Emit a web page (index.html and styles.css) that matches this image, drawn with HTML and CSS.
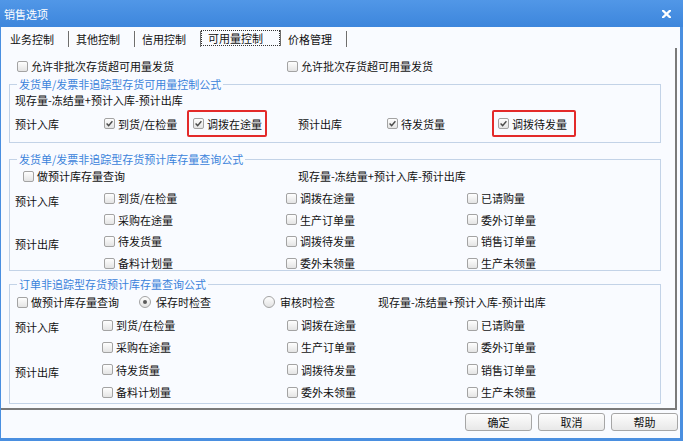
FILE: index.html
```html
<!DOCTYPE html>
<html lang="zh-CN">
<head>
<meta charset="utf-8">
<title>销售选项</title>
<link rel="stylesheet" href="styles.css">
</head>
<body>
<div class="window">
  <div class="titlebar">
    <span class="title">销售选项</span>
    <svg class="close" width="9" height="8" viewBox="0 0 9 8"><path d="M1 0.6 L8 7.4 M8 0.6 L1 7.4" stroke="#fff" stroke-width="2.2" stroke-linecap="square"/></svg>
  </div>
  <div class="frame">
    <div class="tabs">
      <span class="tab">业务控制</span>
      <span class="tab">其他控制</span>
      <span class="tab">信用控制</span>
      <span class="tab tab-active"><span class="focus">可用量控制</span></span>
      <span class="tab">价格管理</span>
    </div>
    <div class="panel">
      <div class="top-row">
        <span class="chk"><span class="box"></span>允许非批次存货超可用量发货</span>
        <span class="chk"><span class="box"></span>允许批次存货超可用量发货</span>
      </div>

      <fieldset class="group g1">
        <legend>发货单/发票非追踪型存货可用量控制公式</legend>
        <div class="formula">现存量-冻结量+预计入库-预计出库</div>
        <div class="g1-row">
          <span class="lbl w-lbl">预计入库</span>
          <span class="chk w-a"><span class="box checked"><svg width="9" height="9" viewBox="0 0 9 9"><path d="M1.6 4.6 L3.6 6.6 L7.4 2.2" fill="none" stroke="#4a4a4a" stroke-width="1.4"/></svg></span>到货/在检量</span>
          <span class="hl w-hl1"><span class="chk"><span class="box checked"><svg width="9" height="9" viewBox="0 0 9 9"><path d="M1.6 4.6 L3.6 6.6 L7.4 2.2" fill="none" stroke="#4a4a4a" stroke-width="1.4"/></svg></span>调拨在途量</span></span>
          <span class="lbl w-lbl">预计出库</span>
          <span class="chk w-b"><span class="box checked"><svg width="9" height="9" viewBox="0 0 9 9"><path d="M1.6 4.6 L3.6 6.6 L7.4 2.2" fill="none" stroke="#4a4a4a" stroke-width="1.4"/></svg></span>待发货量</span>
          <span class="hl w-hl2"><span class="chk"><span class="box checked"><svg width="9" height="9" viewBox="0 0 9 9"><path d="M1.6 4.6 L3.6 6.6 L7.4 2.2" fill="none" stroke="#4a4a4a" stroke-width="1.4"/></svg></span>调拨待发量</span></span>
        </div>
      </fieldset>

      <fieldset class="group g2">
        <legend>发货单/发票非追踪型存货预计库存量查询公式</legend>
        <div class="head2">
          <span class="chk h2-first"><span class="box"></span>做预计库存量查询</span>
          <span class="formula">现存量-冻结量+预计入库-预计出库</span>
        </div>
        <div class="grid grid2">
          <span class="lbl">预计入库</span>
          <span class="chk"><span class="box"></span>到货/在检量</span>
          <span class="chk"><span class="box"></span>调拨在途量</span>
          <span class="chk"><span class="box"></span>已请购量</span>
          <span class="chk col2"><span class="box"></span>采购在途量</span>
          <span class="chk"><span class="box"></span>生产订单量</span>
          <span class="chk"><span class="box"></span>委外订单量</span>
          <span class="lbl">预计出库</span>
          <span class="chk"><span class="box"></span>待发货量</span>
          <span class="chk"><span class="box"></span>调拨待发量</span>
          <span class="chk"><span class="box"></span>销售订单量</span>
          <span class="chk col2"><span class="box"></span>备料计划量</span>
          <span class="chk"><span class="box"></span>委外未领量</span>
          <span class="chk"><span class="box"></span>生产未领量</span>
        </div>
      </fieldset>

      <fieldset class="group g3">
        <legend>订单非追踪型存货预计库存量查询公式</legend>
        <div class="head3">
          <span class="chk h3-a"><span class="box"></span>做预计库存量查询</span>
          <span class="rad h3-b"><span class="radio on"></span>保存时检查</span>
          <span class="rad h3-c"><span class="radio"></span>审核时检查</span>
          <span class="formula">现存量-冻结量+预计入库-预计出库</span>
        </div>
        <div class="grid grid3">
          <span class="lbl">预计入库</span>
          <span class="chk"><span class="box"></span>到货/在检量</span>
          <span class="chk"><span class="box"></span>调拨在途量</span>
          <span class="chk"><span class="box"></span>已请购量</span>
          <span class="chk col2"><span class="box"></span>采购在途量</span>
          <span class="chk"><span class="box"></span>生产订单量</span>
          <span class="chk"><span class="box"></span>委外订单量</span>
          <span class="lbl">预计出库</span>
          <span class="chk"><span class="box"></span>待发货量</span>
          <span class="chk"><span class="box"></span>调拨待发量</span>
          <span class="chk"><span class="box"></span>销售订单量</span>
          <span class="chk col2"><span class="box"></span>备料计划量</span>
          <span class="chk"><span class="box"></span>委外未领量</span>
          <span class="chk"><span class="box"></span>生产未领量</span>
        </div>
      </fieldset>
    </div>
    <div class="buttons">
      <button class="btn">确定</button>
      <button class="btn">取消</button>
      <button class="btn">帮助</button>
    </div>
  </div>
</div>
</body>
</html>
```

FILE: styles.css
```css
* { box-sizing: border-box; }
html, body { margin: 0; padding: 0; }
body {
  width: 683px;
  height: 441px;
  overflow: hidden;
  font-family: "Noto Sans CJK SC", "Microsoft YaHei", sans-serif;
  font-size: 11px;
  line-height: 14px;
  color: #111;
  background: #f9fbff;
}
.window {
  width: 683px;
  height: 441px;
  display: flex;
  flex-direction: column;
}
.titlebar {
  height: 27px;
  flex: none;
  background: linear-gradient(#5197e7, #3d86dc);
  display: flex;
  align-items: center;
  justify-content: space-between;
  padding: 0 12px 0 4px;
  color: #fff;
}
.title { font-size: 11px; line-height: 14px; }
.close { display: block; }

.frame {
  flex: 1;
  display: flex;
  flex-direction: column;
  border-left: 1px solid #4a8fe0;
  border-right: 3px solid #4a8fe0;
  border-bottom: 3px solid #4a8fe0;
  background: #f9fbff;
}

/* tabs */
.tabs {
  height: 21px;
  flex: none;
  display: flex;
  align-items: flex-start;
  padding-left: 2px;
}
.tab {
  margin-top: 4px;
  height: 16px;
  line-height: 16px;
  padding: 0 14px 0 7px;
  border-right: 1px solid #6e6e6e;
  box-shadow: 1px 0 0 #ffffff;
  color: #111;
}
.tab-active {
  padding: 0;
  margin-top: 3px;
}
.focus {
  display: block;
  height: 16px;
  line-height: 14px;
  padding: 0 16px 0 6px;
  border: 1px dotted #333;
}

/* panel */
.panel {
  flex: none;
  padding: 10px 14px 4px 8px;
  margin-right: 3px;
  border-right: 2px solid #7a7a7a;
  border-bottom: 2px solid #7a7a7a;
}
.top-row {
  display: grid;
  grid-template-columns: 270px 1fr;
  height: 16px;
  align-items: center;
  padding-left: 8px;
}

.chk, .rad {
  display: flex;
  align-items: center;
  white-space: nowrap;
  height: 14px;
}
.box {
  flex: none;
  width: 11px;
  height: 11px;
  margin-right: 3px;
  border: 1px solid #a3a3a3;
  border-radius: 2px;
  background: linear-gradient(#fefefe, #e4e4e4);
  display: flex;
  align-items: center;
  justify-content: center;
}
.box svg { display: block; }
.radio {
  flex: none;
  width: 12px;
  height: 12px;
  margin-right: 5px;
  border: 1px solid #a3a3a3;
  border-radius: 50%;
  background: linear-gradient(#fefefe, #e2e2e2);
  display: flex;
  align-items: center;
  justify-content: center;
}
.radio.on::after {
  content: "";
  width: 4px;
  height: 4px;
  border-radius: 50%;
  background: #5a5a5a;
}

/* groups */
.group {
  margin: 0;
  min-width: 0;
  border: 1px solid #c3d3e7;
  padding: 2px 5px 5px;
}
.group legend {
  padding: 0 2px;
  margin-left: 2px;
  line-height: 14px;
  color: #3b83db;
}
.g1 { margin-top: 3px; }
.g2 { margin-top: 9px; padding: 3px 5px 0; }
.g3 { margin-top: 6px; padding: 4px 5px 4px; }

.formula { white-space: nowrap; }

.g1-row {
  margin-top: 3px;
  height: 27px;
  display: flex;
  align-items: center;
}
.lbl { white-space: nowrap; }
.w-lbl { width: 89px; flex: none; }
.w-a { width: 83px; flex: none; }
.w-b { width: 105px; flex: none; }
.hl {
  flex: none;
  height: 27px;
  display: flex;
  align-items: center;
  padding-left: 4px;
  border: 2px solid #e32a2a;
  border-radius: 2px;
}
.w-hl1 { width: 80px; margin-right: 31px; }
.w-hl2 { width: 84px; }

.head2 {
  display: flex;
  height: 14px;
  align-items: center;
}
.h2-first { width: 275px; margin-left: 8px; flex: none; }

.head3 {
  display: flex;
  height: 14px;
  align-items: center;
}
.h3-a { width: 122px; margin-left: 2px; flex: none; }
.h3-b { width: 124px; flex: none; }
.h3-c { width: 115px; flex: none; }

.grid {
  display: grid;
  grid-template-rows: repeat(4, 14px);
  align-items: center;
}
.grid .lbl { align-self: start; grid-column: 1; }
.grid .col2 { grid-column: 2; }
.grid2 {
  margin-top: 8px;
  grid-template-columns: 89px 182px 181px 1fr;
  row-gap: 7.7px;
}
.grid2 .lbl { margin-top: 3px; }
.grid3 {
  margin-top: 9px;
  grid-template-columns: 87px 185px 180px 1fr;
  row-gap: 8.33px;
}
.grid3 .lbl { margin-top: 2px; }

/* buttons */
.buttons {
  display: flex;
  justify-content: flex-end;
  gap: 6px;
  padding: 3px 2px 0 0;
}
.btn {
  width: 67px;
  height: 18px;
  padding: 0;
  font-family: inherit;
  font-size: 11px;
  line-height: 16px;
  color: #111;
  border: 1px solid #a6a6a6;
  border-radius: 3px;
  background: linear-gradient(#fdfdfd, #e8e8e8);
}
```
